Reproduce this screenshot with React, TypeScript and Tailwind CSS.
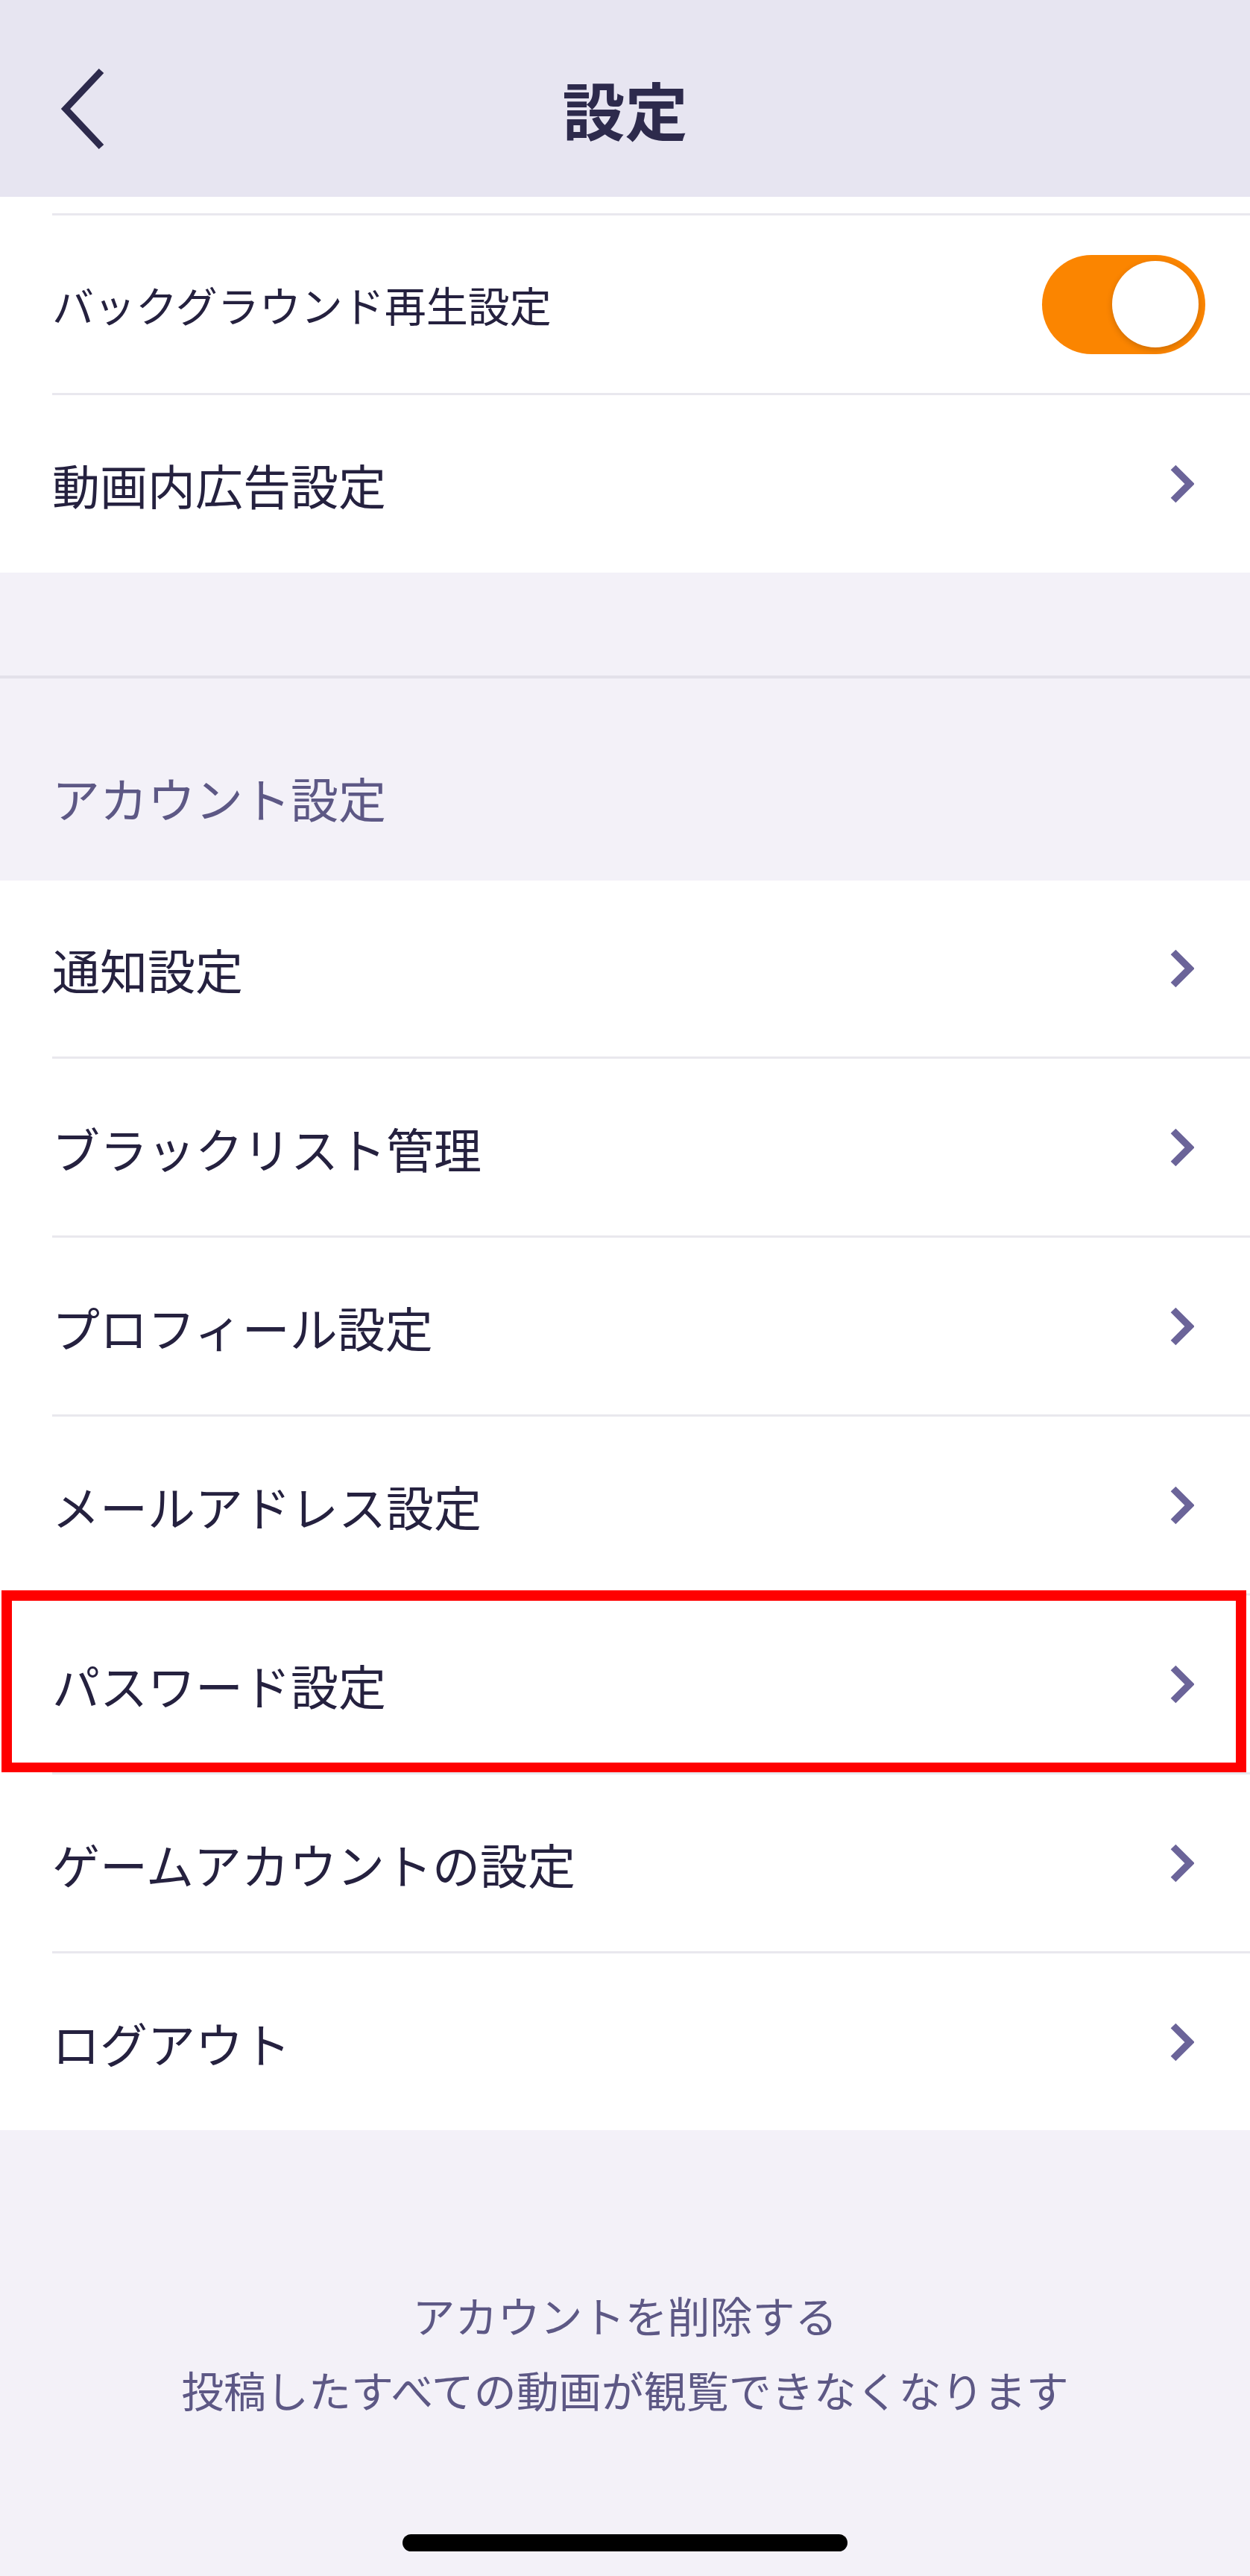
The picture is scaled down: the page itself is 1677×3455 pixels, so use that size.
import React from 'react';

const FONT = { fontFamily: '"Hiragino Sans", "Noto Sans CJK JP", "Noto Sans", sans-serif' };

const accountItems = [
  'ブラックリスト管理',
  'プロフィール設定',
  'メールアドレス設定',
  'パスワード設定',
  'ゲームアカウントの設定',
  'ログアウト',
];

const Chevron: React.FC = () => (
  <svg width="34" height="56" viewBox="0 0 34 56" fill="none" className="shrink-0">
    <path d="M6 6 L28 28 L6 50" stroke="#6b6499" strokeWidth="9.5" strokeLinejoin="miter" />
  </svg>
);

const Toggle: React.FC = () => (
  <div className="-mr-[15px] w-[219px] h-[133px] rounded-full bg-[#fb8500] flex items-center justify-end pr-[9px] shrink-0">
    <div className="w-[116px] h-[116px] rounded-full bg-white shadow-[0_3px_8px_rgba(0,0,0,0.18)]" />
  </div>
);

const Row: React.FC<{
  label: string;
  first?: boolean;
  highlight?: boolean;
  height?: string;
  textSize?: string;
  right?: React.ReactNode;
}> = ({ label, first, highlight, height = 'h-[240px]', textSize = 'text-[64px]', right }) => (
  <div className="relative bg-white">
    <div
      className={`ml-[70px] ${first ? '' : 'border-t-[3px] border-[#e9e8ee]'} ${height} flex items-center justify-between pr-[75px]`}
    >
      <span className={`${textSize} leading-none text-[#25213f]`}>{label}</span>
      {right ?? <Chevron />}
    </div>
    {highlight && (
      <div className="absolute left-[2px] right-[5px] top-[-4px] bottom-[-1px] border-[14px] border-[#ff0000] pointer-events-none" />
    )}
  </div>
);

export default function App() {
  return (
    <div className="w-[1677px] h-[3455px] overflow-hidden bg-[#f3f1f8] flex flex-col" style={FONT}>
      {/* header */}
      <div className="h-[264px] shrink-0 bg-[#e7e5f1] grid grid-cols-[1fr_auto_1fr] items-center pt-[28px]">
        <div className="pl-[80px] flex items-center">
          <svg width="64" height="110" viewBox="0 0 64 110" fill="none">
            <path d="M56 4 L8 55 L56 106" stroke="#2d2a4c" strokeWidth="9" strokeLinejoin="miter" />
          </svg>
        </div>
        <h1 className="text-[84px] font-bold leading-none text-[#2d2a4c]">設定</h1>
        <div />
      </div>

      {/* playback section */}
      <div className="bg-white pt-[22px] shrink-0">
        <Row label="バックグラウンド再生設定" height="h-[241px]" textSize="text-[56px]" right={<Toggle />} />
        <Row label="動画内広告設定" height="h-[241px]" />
      </div>

      {/* spacer + section title */}
      <div className="h-[138px] shrink-0" />
      <div className="border-t-[4px] border-[#e3e1ea] h-[275px] shrink-0 flex items-center pl-[70px] pt-[46px]">
        <span className="text-[64px] leading-none text-[#5d5885]">アカウント設定</span>
      </div>

      {/* account section */}
      <div className="bg-white shrink-0">
        <Row label="通知設定" first height="h-[236px]" />
        {accountItems.map((item) => (
          <Row key={item} label={item} highlight={item === 'パスワード設定'} />
        ))}
      </div>

      {/* delete account */}
      <div className="flex flex-col items-center pt-[197px]">
        <p className="text-[57px] leading-[100px] text-[#5d5885] text-center">
          アカウントを削除する
          <br />
          投稿したすべての動画が観覧できなくなります
        </p>
        <div className="mt-[145px] w-[597px] h-[23px] rounded-full bg-black" />
      </div>
    </div>
  );
}
